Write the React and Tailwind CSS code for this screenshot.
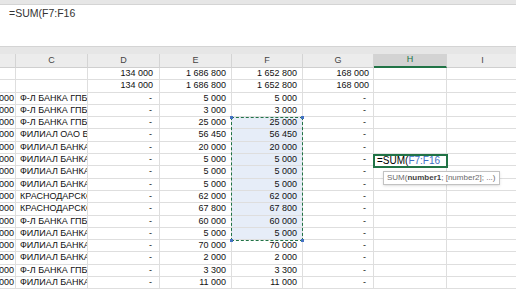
import React from "react";

const cols = [
  { key: "b", w: "w-[16px]" },
  { key: "c", w: "w-[72px]" },
  { key: "d", w: "w-[72px]" },
  { key: "e", w: "w-[72px]" },
  { key: "f", w: "w-[71px]" },
  { key: "g", w: "w-[71px]" },
  { key: "h", w: "w-[73px]" },
  { key: "i", w: "w-[72px]" },
];

const vals = [
  ["Ф-Л БАНКА ГПБ", "5 000"],
  ["Ф-Л БАНКА ГПБ", "3 000"],
  ["Ф-Л БАНКА ГПБ", "25 000"],
  ["ФИЛИАЛ ОАО БАНК", "56 450"],
  ["ФИЛИАЛ БАНКА", "20 000"],
  ["ФИЛИАЛ БАНКА", "5 000"],
  ["ФИЛИАЛ БАНКА", "5 000"],
  ["ФИЛИАЛ БАНКА", "5 000"],
  ["КРАСНОДАРСКОЕ", "62 000"],
  ["КРАСНОДАРСКОЕ", "67 800"],
  ["Ф-Л БАНКА ГПБ", "60 000"],
  ["ФИЛИАЛ БАНКА", "5 000"],
  ["ФИЛИАЛ БАНКА", "70 000"],
  ["ФИЛИАЛ БАНКА", "2 000"],
  ["Ф-Л БАНКА ГПБ", "3 300"],
  ["ФИЛИАЛ БАНКА", "11 000"],
];

const rows = [
  { b: "", c: "", d: "134 000", e: "1 686 800", f: "1 652 800", g: "168 000" },
  { b: "", c: "", d: "134 000", e: "1 686 800", f: "1 652 800", g: "168 000" },
  ...vals.map(([c, v]) => ({ b: "1 000", c, d: "-", e: v, f: v, g: "-" })),
];

const Header = ({ label, w, active }) => (
  <div
    className={`${w} shrink-0 h-full flex items-center justify-center border-r border-[#d4d4d4] ${
      active
        ? "bg-[#d3d3d3] text-[#217346] border-b-2 border-b-[#217346]"
        : "text-[#444] border-b border-b-[#cfcfcf]"
    }`}
  >
    {label}
  </div>
);

export default function App() {
  return (
    <div
      className="w-[516px] h-[290px] overflow-hidden bg-white text-[9px] text-[#111]"
      style={{ fontFamily: '"Liberation Sans", Arial, sans-serif' }}
    >
      {/* top strip */}
      <div className="h-[5px] bg-[#e6e6e6] border-b border-[#d4d4d4]" />

      {/* formula bar */}
      <div className="h-[42px] bg-white border-b border-[#d4d4d4] pl-[9px] pt-[1px] text-[10.5px] leading-[14px] text-[#333]">
        =SUM(F7:F16
      </div>

      <div className="h-[7px] bg-[#e6e6e6]" />

      {/* column headers */}
      <div className="h-[14px] flex bg-[#ececec] text-[9px]">
        <Header label="" w="w-[16px]" />
        <Header label="C" w="w-[72px]" />
        <Header label="D" w="w-[72px]" />
        <Header label="E" w="w-[72px]" />
        <Header label="F" w="w-[71px]" />
        <Header label="G" w="w-[71px]" />
        <Header label="H" w="w-[73px]" active />
        <Header label="I" w="w-[72px]" />
      </div>

      {/* grid */}
      <div className="relative">
        {rows.map((r, i) => {
          const sel = i >= 4 && i <= 13;
          return (
            <div key={i} className="flex h-[12.3px] leading-[11.3px]">
              {cols.map((c) => {
                const v = r[c.key] || "";
                let align = "justify-end pr-[5px]";
                if (c.key === "b") align = "justify-end pr-[1px]";
                if (c.key === "c") align = "justify-start pl-[4px]";
                if (c.key === "d") align = "justify-end pr-[6px]";
                if (c.key === "g") align = v === "-" ? "justify-end pr-[7px]" : "justify-end pr-[4px]";
                if (c.key === "d" && v === "-") align = "justify-end pr-[7px]";
                return (
                  <div
                    key={c.key}
                    className={`${c.w} shrink-0 flex overflow-hidden whitespace-nowrap border-r border-b border-[#dedede] ${align} ${
                      c.key === "f" && sel ? "bg-[#e6edf8]" : ""
                    }`}
                  >
                    {v}
                  </div>
                );
              })}
            </div>
          );
        })}

        {/* copy selection marquee F7:F16 */}
        <div className="absolute left-[231px] top-[48.7px] w-[72px] h-[124px] border-[1.5px] border-dashed border-[#217346]" />
        <div className="absolute left-[230px] top-[47.7px] w-[3px] h-[3px] bg-[#4472c4]" />
        <div className="absolute left-[301px] top-[47.7px] w-[3px] h-[3px] bg-[#4472c4]" />
        <div className="absolute left-[230px] top-[170.7px] w-[3px] h-[3px] bg-[#4472c4]" />
        <div className="absolute left-[301px] top-[170.7px] w-[3px] h-[3px] bg-[#4472c4]" />

        {/* editing cell H */}
        <div className="absolute left-[373px] top-[85.5px] w-[75px] h-[14px] bg-white border-2 border-[#217346] pl-[2px] text-[10px] leading-[10px] whitespace-nowrap">
          <span className="text-black">=SUM(</span>
          <span className="text-[#3d6fc6]">F7:F16</span>
        </div>

        {/* function tooltip */}
        <div className="absolute left-[383px] top-[103px] h-[14px] px-[3px] bg-white border border-[#c2c2c2] text-[8px] leading-[12px] text-[#6b6b6b] whitespace-nowrap shadow-sm">
          SUM(<span className="font-bold text-[#444]">number1</span>; [number2]; ...)
        </div>
      </div>
    </div>
  );
}
